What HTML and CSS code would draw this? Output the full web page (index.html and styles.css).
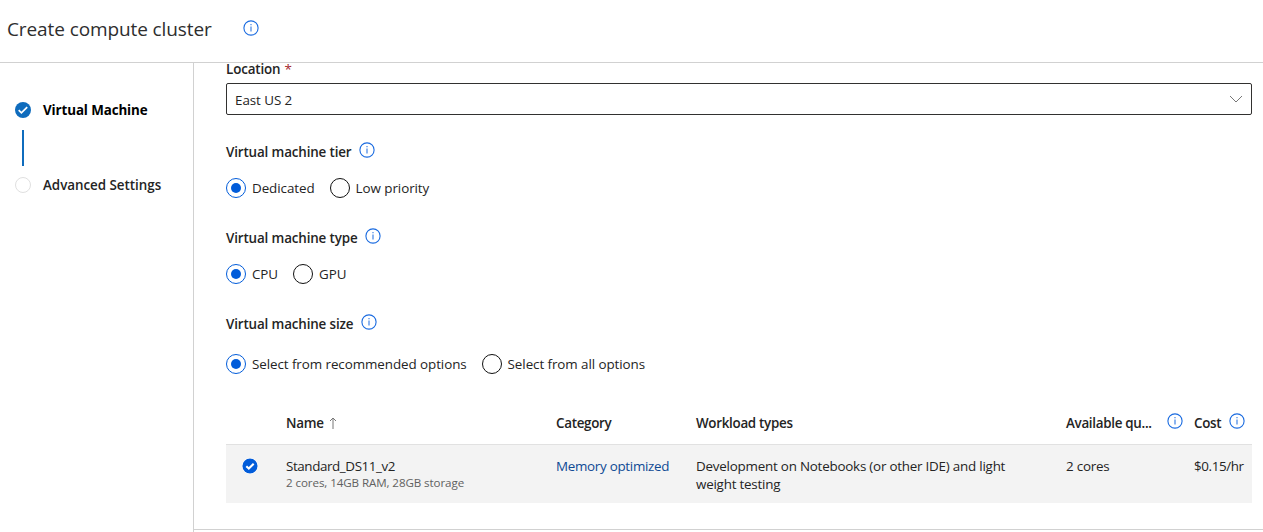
FILE: index.html
```html
<!DOCTYPE html>
<html lang="en">
<head>
<meta charset="utf-8">
<title>Create compute cluster</title>
<link rel="stylesheet" href="styles.css">
</head>
<body>
<svg class="defs" width="0" height="0" aria-hidden="true">
  <symbol id="info" viewBox="0 0 16 16">
    <circle cx="8" cy="8" r="7.1" fill="none" stroke="currentColor" stroke-width="1.1"/>
    <path d="M7.5 4h1v1.2h-1zM7.5 6.6h1V11.6h-1z" fill="currentColor"/>
  </symbol>
  <symbol id="check" viewBox="0 0 16 16">
    <circle cx="8" cy="8" r="8" fill="currentColor"/>
    <path d="M3.7 8.2l2.7 2.7 5.8-5.8" fill="none" stroke="#fff" stroke-width="1.7"/>
  </symbol>
  <symbol id="check-bold" viewBox="0 0 16 16">
    <circle cx="8" cy="8" r="7.6" fill="currentColor"/>
    <path d="M4.3 8.3l2.5 2.3 4.9-4.8" fill="none" stroke="#fff" stroke-width="2.1"/>
  </symbol>
</svg>
<header class="header">
  <h1 class="title">Create compute cluster</h1>
  <svg class="info"><use href="#info"/></svg>
</header>
<div class="body">
  <nav class="steps">
    <div class="step current"><svg class="step-icon"><use href="#check"/></svg><span>Virtual Machine</span></div>
    <div class="connector"></div>
    <div class="step"><span class="step-empty"></span><span>Advanced Settings</span></div>
  </nav>
  <main class="main">
    <div class="form">
      <div class="label location">Location<span class="required">*</span></div>
      <div class="select"><span>East US 2</span>
        <svg class="chevron" viewBox="0 0 14 8"><path d="M1 1l6 6 6-6" fill="none" stroke="#777" stroke-width="1"/></svg>
      </div>
      <div class="label tier"><span>Virtual machine tier</span><svg class="info"><use href="#info"/></svg></div>
      <div class="radios">
        <label class="radio on"><i class="dot"></i><span>Dedicated</span></label>
        <label class="radio"><i class="dot"></i><span>Low priority</span></label>
      </div>
      <div class="label group"><span>Virtual machine type</span><svg class="info"><use href="#info"/></svg></div>
      <div class="radios">
        <label class="radio on"><i class="dot"></i><span>CPU</span></label>
        <label class="radio"><i class="dot"></i><span>GPU</span></label>
      </div>
      <div class="label group"><span>Virtual machine size</span><svg class="info"><use href="#info"/></svg></div>
      <div class="radios size">
        <label class="radio on"><i class="dot"></i><span>Select from recommended options</span></label>
        <label class="radio"><i class="dot"></i><span>Select from all options</span></label>
      </div>
      <div class="grid head">
        <div></div>
        <div class="cell"><span>Name</span><svg class="sort" viewBox="0 0 8 12"><path d="M4 12V1M1 4l3-3 3 3" fill="none" stroke="#777" stroke-width="1"/></svg></div>
        <div class="cell">Category</div>
        <div class="cell">Workload types</div>
        <div class="cell avail"><span>Available qu...</span><svg class="info"><use href="#info"/></svg></div>
        <div class="cell cost"><span>Cost</span><svg class="info"><use href="#info"/></svg></div>
      </div>
      <div class="grid row">
        <div class="pick"><svg class="pick-icon"><use href="#check-bold"/></svg></div>
        <div><div class="name">Standard_DS11_v2</div><div class="specs">2 cores, 14GB RAM, 28GB storage</div></div>
        <div class="category">Memory optimized</div>
        <div class="workload">Development on Notebooks (or other IDE) and light<br>weight testing</div>
        <div class="cores">2 cores</div>
        <div class="price">$0.15/hr</div>
      </div>
    </div>
  </main>
</div>
</body>
</html>
```
FILE: styles.css
```css
* { box-sizing: border-box; }
body {
  margin: 0;
  height: 532px;
  display: flex;
  flex-direction: column;
  overflow: hidden;
  background: #fff;
  color: #242424;
  font: 13.4px/20px "Open Sans", "Noto Sans", sans-serif;
  letter-spacing: -0.06px;
}
.defs { position: absolute; }
.info { width: 16px; height: 16px; flex: none; color: #1a6be0; }
.header {
  height: 63px;
  flex: none;
  display: flex;
  align-items: flex-start;
  padding: 15px 0 0 7px;
  border-bottom: 1px solid #d1d1d1;
}
.title { margin: 0; width: 236px; font-size: 19px; font-weight: 400; line-height: 28px; letter-spacing: -0.1px; color: #2e2e2e; }
.header .info { margin-top: 4.5px; }
.body { flex: 1; display: flex; min-height: 0; }
.steps { width: 194px; flex: none; border-right: 1px solid #d1d1d1; padding: 37px 0 0 15px; font-weight: 600; }
.step { display: flex; align-items: center; gap: 12px; height: 20px; letter-spacing: -0.03px; }
.step.current { color: #000; font-weight: 700; letter-spacing: -0.12px; }
.step-icon { width: 16px; height: 16px; color: #0f6cbd; }
.step-empty { width: 16px; height: 16px; border: 1.5px solid #e0e0e0; border-radius: 50%; }
.connector { width: 2px; height: 36px; margin: 10px 0 9px 7px; background: #0f6cbd; }
.main { flex: 1; min-width: 0; }
.form { height: 467px; overflow: hidden; padding: 0 11px 0 32px; border-bottom: 1px solid #d1d1d1; }
.label { display: flex; align-items: center; gap: 7.5px; height: 20px; font-weight: 600; letter-spacing: -0.14px; }
.label .info { margin-top: -4px; }
.location { margin-top: -4px; gap: 4px; }
.required { color: #a4262c; font-weight: 400; }
.select {
  height: 32px;
  margin-top: 4px;
  padding: 1px 8px 0;
  display: flex;
  align-items: center;
  justify-content: space-between;
  border: 1px solid #323130;
  border-radius: 2px;
}
.chevron { width: 14px; height: 8px; margin-top: -2px; }
.tier { margin-top: 27px; }
.group { margin-top: 30px; }
.radios { display: flex; gap: 15px; margin-top: 16px; }
.radios.size { margin-top: 20px; letter-spacing: -0.07px; }
.radio { display: flex; align-items: center; gap: 6px; height: 20px; }
.dot { width: 20px; height: 20px; border: 1px solid #111; border-radius: 50%; display: grid; place-items: center; }
.on .dot { border-color: #015cda; }
.on .dot::after { content: ""; width: 10px; height: 10px; border-radius: 50%; background: #015cda; }
.grid { display: grid; grid-template-columns: 60px 270px 140px 370px 128px 58px; }
.head { height: 43px; margin-top: 28px; padding-top: 11px; border-bottom: 1px solid #e1e1e1; font-weight: 600; letter-spacing: -0.3px; }
.cell { display: flex; height: 20px; align-items: center; white-space: nowrap; }
.cell .info { margin-top: -4px; }
.sort { width: 8px; height: 12px; margin-left: 5px; }
.avail { justify-content: space-between; padding-right: 11.5px; }
.cost { gap: 8px; }
.row { height: 58px; padding-top: 12px; background: #f3f3f3; line-height: 18px; white-space: nowrap; letter-spacing: -0.22px; }
.pick { padding: 1px 0 0 16px; }
.pick-icon { display: block; width: 16px; height: 16px; color: #015cda; background: #fff; border-radius: 50%; }
.name { letter-spacing: -0.4px; }
.specs { font-size: 11.6px; line-height: 16px; letter-spacing: -0.09px; color: #616161; }
.category { color: #0f4a94; letter-spacing: -0.29px; }
.price { letter-spacing: -0.4px; }
```
